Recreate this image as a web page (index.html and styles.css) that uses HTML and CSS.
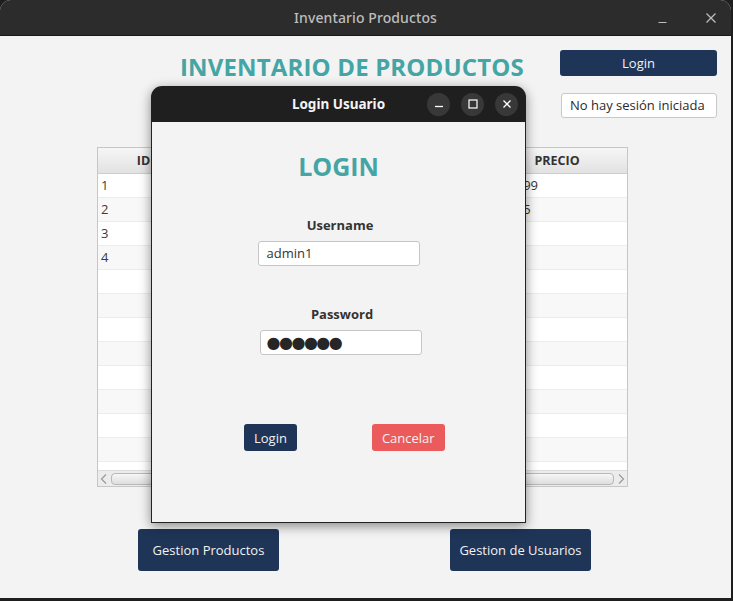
FILE: index.html
```html
<!DOCTYPE html>
<html lang="es">
<head>
<meta charset="utf-8">
<title>Inventario Productos</title>
<link rel="stylesheet" href="styles.css">
</head>
<body>
<div class="window">
  <header class="titlebar">
    <span></span>
    <span class="title">Inventario Productos</span>
    <div class="wm-controls">
      <svg class="wm-icon" width="12" height="12" viewBox="0 0 12 12"><line x1="1.5" y1="10.5" x2="9.5" y2="10.5" stroke="#bdbdbd" stroke-width="1.2"/></svg>
      <svg class="wm-icon" width="12" height="12" viewBox="0 0 12 12"><path d="M1.5 1.5 L10.5 10.5 M10.5 1.5 L1.5 10.5" stroke="#bdbdbd" stroke-width="1.3" fill="none"/></svg>
    </div>
  </header>

  <main class="content">
    <div class="top">
      <h1 class="heading">INVENTARIO DE PRODUCTOS</h1>
      <div class="session">
        <button class="btn btn-navy btn-top">Login</button>
        <div class="status">No hay sesión iniciada</div>
      </div>
    </div>

    <div class="table">
      <div class="thead">
        <div class="th">ID</div>
        <div class="th"></div>
        <div class="th"></div>
        <div class="th"></div>
        <div class="th">PRECIO</div>
      </div>
      <div class="tbody">
        <div class="tr"><div class="td">1</div><div class="td"></div><div class="td"></div><div class="td"></div><div class="td">1200.99</div></div>
        <div class="tr"><div class="td">2</div><div class="td"></div><div class="td"></div><div class="td"></div><div class="td">1250.5</div></div>
        <div class="tr"><div class="td">3</div><div class="td"></div><div class="td"></div><div class="td"></div><div class="td">25.0</div></div>
        <div class="tr"><div class="td">4</div><div class="td"></div><div class="td"></div><div class="td"></div><div class="td">80.0</div></div>
        <div class="tr"></div>
        <div class="tr"></div>
        <div class="tr"></div>
        <div class="tr"></div>
        <div class="tr"></div>
        <div class="tr"></div>
        <div class="tr"></div>
        <div class="tr"></div>
        <div class="tr"></div>
      </div>
      <div class="hscroll">
        <svg class="arrow" width="10" height="12" viewBox="0 0 10 12"><path d="M7 1.5 L2.5 6 L7 10.5" stroke="#9a9a9a" stroke-width="1.2" fill="none"/></svg>
        <div class="thumb"></div>
        <svg class="arrow" width="10" height="12" viewBox="0 0 10 12"><path d="M3 1.5 L7.5 6 L3 10.5" stroke="#9a9a9a" stroke-width="1.2" fill="none"/></svg>
      </div>
    </div>

    <div class="actions">
      <button class="btn btn-navy btn-big">Gestion Productos</button>
      <button class="btn btn-navy btn-big">Gestion de Usuarios</button>
    </div>
  </main>

  <section class="dialog">
    <header class="dlg-bar">
      <span></span>
      <span class="dlg-title">Login Usuario</span>
      <div class="dlg-controls">
        <span class="circle"><svg width="10" height="10" viewBox="0 0 10 10"><line x1="1" y1="7.5" x2="9" y2="7.5" stroke="#fff" stroke-width="1.3"/></svg></span>
        <span class="circle"><svg width="10" height="10" viewBox="0 0 10 10"><rect x="1" y="1" width="8" height="8" stroke="#fff" stroke-width="1.2" fill="none"/></svg></span>
        <span class="circle"><svg width="10" height="10" viewBox="0 0 10 10"><path d="M1.5 1.5 L8.5 8.5 M8.5 1.5 L1.5 8.5" stroke="#fff" stroke-width="1.3" fill="none"/></svg></span>
      </div>
    </header>
    <div class="dlg-body">
      <h2 class="dlg-heading">LOGIN</h2>
      <label class="field-label">Username</label>
      <div class="input">admin1</div>
      <label class="field-label field-label-pw">Password</label>
      <div class="input input-pw">●●●●●●</div>
      <div class="dlg-actions">
        <button class="btn btn-navy btn-small">Login</button>
        <button class="btn btn-red btn-small">Cancelar</button>
      </div>
    </div>
  </section>
</div>
</body>
</html>
```

FILE: styles.css
```css
* { box-sizing: border-box; }

html, body {
  margin: 0;
  padding: 0;
  background: #1e1e1e;
}

body {
  width: 733px;
  height: 601px;
  overflow: hidden;
  font-family: "Open Sans", "Noto Sans", sans-serif;
}

.window {
  position: relative;
  width: 731px;
  height: 598px;
  background: #f3f3f3;
  border-radius: 11px 11px 0 0;
  overflow: hidden;
}

.titlebar {
  height: 36px;
  background: #2c2c2c;
  display: grid;
  grid-template-columns: 1fr auto 1fr;
  align-items: center;
  border-bottom: 1px solid #1a1a1a;
}

.title {
  font-family: "Noto Sans", sans-serif;
  font-weight: 500;
  font-size: 14px;
  color: #bdbdbd;
  letter-spacing: 0.1px;
}

.wm-controls {
  justify-self: end;
  display: flex;
  gap: 36px;
  padding-right: 14px;
  align-items: center;
}

.wm-icon { display: block; }

.content {
  display: flex;
  flex-direction: column;
}

.top {
  display: grid;
  grid-template-columns: 1fr 157px;
  padding: 14px 14px 0 180px;
}

.heading {
  margin: 4px 0 0 0;
  font-size: 24px;
  line-height: 26px;
  font-weight: 700;
  color: #45a5a5;
  letter-spacing: 0.15px;
}

.session {
  display: flex;
  flex-direction: column;
  gap: 17px;
}

.btn {
  border: none;
  font-family: "Open Sans", "Noto Sans", sans-serif;
  font-size: 13px;
  color: #f2f2f2;
  border-radius: 3px;
  padding: 0;
  cursor: pointer;
}

.btn-navy { background: #1f3557; }
.btn-red { background: #ec5b5b; }

.btn-top {
  height: 26px;
  width: 157px;
}

.status {
  height: 25px;
  margin-left: 1px;
  background: #ffffff;
  border: 1px solid #c8c8c8;
  border-radius: 3px;
  font-size: 13px;
  color: #2a2a2a;
  line-height: 23px;
  padding-left: 8px;
}

.table {
  margin: 29px 0 0 97px;
  width: 531px;
  height: 340px;
  border: 1px solid #c6c6c6;
  background: #fff;
  display: flex;
  flex-direction: column;
}

.thead {
  display: grid;
  grid-template-columns: 92px 99px 99px 99px 1fr;
  height: 26px;
  background: linear-gradient(#f6f6f6, #e2e2e2);
  border-bottom: 1px solid #cdcdcd;
}

.th {
  font-size: 12.5px;
  font-weight: 700;
  color: #333;
  text-align: center;
  line-height: 25px;
  border-right: 1px solid #d6d6d6;
}
.th:last-child { border-right: none; }

.tbody {
  flex: 1;
  overflow: hidden;
}

.tr {
  display: grid;
  grid-template-columns: 92px 99px 99px 99px 1fr;
  height: 24px;
  border-bottom: 1px solid #ececec;
  background: #ffffff;
}
.tr:nth-child(even) { background: #f8f8f8; }

.td {
  font-size: 13px;
  color: #333;
  line-height: 23px;
  padding-left: 3px;
  white-space: nowrap;
  overflow: hidden;
}
.td:first-child { color: #3b3b3b; }

.hscroll {
  height: 16px;
  background: #ececec;
  border-top: 1px solid #dcdcdc;
  display: flex;
  align-items: center;
  padding: 0 1px;
  gap: 2px;
}

.arrow { display: block; flex: none; }

.thumb {
  flex: 1;
  height: 12px;
  border: 1px solid #b8b8b8;
  border-radius: 4px;
  background: linear-gradient(#f7f7f7, #dedede);
}

.actions {
  display: flex;
  gap: 171px;
  margin: 42px 0 0 138px;
}

.btn-big {
  width: 141px;
  height: 42px;
}

/* Dialog window */
.dialog {
  position: absolute;
  left: 151px;
  top: 86px;
  width: 375px;
  height: 437px;
  display: flex;
  flex-direction: column;
  box-shadow: 0 3px 12px rgba(0, 0, 0, 0.45);
  border-radius: 11px 11px 0 0;
}

.dlg-bar {
  height: 36px;
  background: #1f1f1f;
  border-radius: 11px 11px 0 0;
  display: grid;
  grid-template-columns: 1fr auto 1fr;
  align-items: center;
  flex: none;
}

.dlg-title {
  font-family: "Noto Sans", sans-serif;
  font-weight: 700;
  font-size: 13.5px;
  color: #f4f4f4;
}

.dlg-controls {
  justify-self: end;
  display: flex;
  gap: 11px;
  padding-right: 8px;
}

.circle {
  width: 23px;
  height: 23px;
  border-radius: 50%;
  background: #383838;
  display: flex;
  align-items: center;
  justify-content: center;
}
.circle svg { display: block; }

.dlg-body {
  flex: 1;
  background: #f3f3f3;
  border: 1px solid #222;
  border-top: none;
  display: flex;
  flex-direction: column;
  align-items: center;
}

.dlg-heading {
  margin: 31px 0 0 0;
  font-size: 25px;
  line-height: 26px;
  font-weight: 700;
  color: #45a5a5;
}

.field-label {
  margin-top: 37px;
  font-size: 13px;
  line-height: 18px;
  font-weight: 700;
  color: #333;
  padding-left: 3px;
}

.field-label-pw {
  margin-top: 39px;
  padding-left: 7px;
}

.input {
  margin-top: 7px;
  width: 162px;
  height: 25px;
  background: #fff;
  border: 1px solid #c6c6c6;
  border-radius: 3px;
  font-size: 13px;
  color: #333;
  line-height: 23px;
  padding-left: 8px;
  overflow: hidden;
  white-space: nowrap;
}

.input-pw {
  margin-left: 4px;
  font-family: "DejaVu Sans", sans-serif;
  font-size: 16px;
  letter-spacing: -1.5px;
  color: #262626;
  padding-left: 6px;
}

.dlg-actions {
  align-self: flex-start;
  margin: 69px 0 0 92px;
  display: flex;
  gap: 75px;
}

.btn-small {
  height: 27px;
  padding: 0 10px;
}
```
